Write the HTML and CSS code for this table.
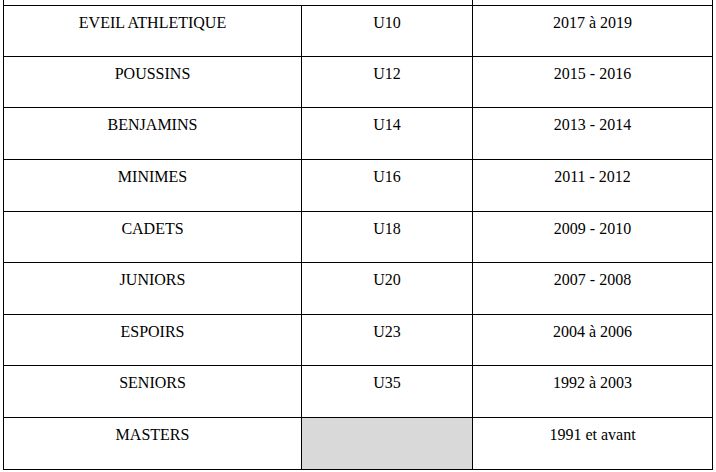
FILE: index.html
```html
<!DOCTYPE html>
<html lang="fr">
<head>
<meta charset="utf-8">
<title>Catégories</title>
<link rel="stylesheet" href="styles.css">
</head>
<body>
<table class="cats">
  <colgroup>
    <col class="c1"><col class="c2"><col class="c3">
  </colgroup>
  <tr class="sliver"><td colspan="2"></td><td></td></tr>
  <tr class="h51"><td>EVEIL ATHLETIQUE</td><td>U10</td><td>2017 à 2019</td></tr>
  <tr class="h51"><td>POUSSINS</td><td>U12</td><td>2015 - 2016</td></tr>
  <tr class="h52"><td>BENJAMINS</td><td>U14</td><td>2013 - 2014</td></tr>
  <tr class="h52"><td>MINIMES</td><td>U16</td><td>2011 - 2012</td></tr>
  <tr class="h51"><td>CADETS</td><td>U18</td><td>2009 - 2010</td></tr>
  <tr class="h52"><td>JUNIORS</td><td>U20</td><td>2007 - 2008</td></tr>
  <tr class="h51"><td>ESPOIRS</td><td>U23</td><td>2004 à 2006</td></tr>
  <tr class="h52"><td>SENIORS</td><td>U35</td><td>1992 à 2003</td></tr>
  <tr class="h52"><td>MASTERS</td><td class="empty"></td><td>1991 et avant</td></tr>
</table>
</body>
</html>
```
FILE: styles.css
```css
html, body {
  margin: 0;
  padding: 0;
  background: #ffffff;
}
body {
  padding-left: 3px;
  font-family: "Liberation Serif", "Times New Roman", serif;
  font-size: 16px;
  color: #000000;
}
.cats {
  border-collapse: collapse;
  table-layout: fixed;
  width: 709px;
}
.c1 { width: 298px; }
.c2 { width: 171px; }
.c3 { width: 240px; }
.cats td {
  border: 1px solid #000000;
  text-align: center;
  vertical-align: top;
  padding: 8px 5px 0;
  line-height: 18px;
}
.sliver td {
  border-top: none;
  padding: 0;
  height: 5px;
}
.sliver { height: 5px; }
.h51 { height: 51px; }
.h52 { height: 52px; }
.cats td.empty {
  background: #d9d9d9;
}
```
